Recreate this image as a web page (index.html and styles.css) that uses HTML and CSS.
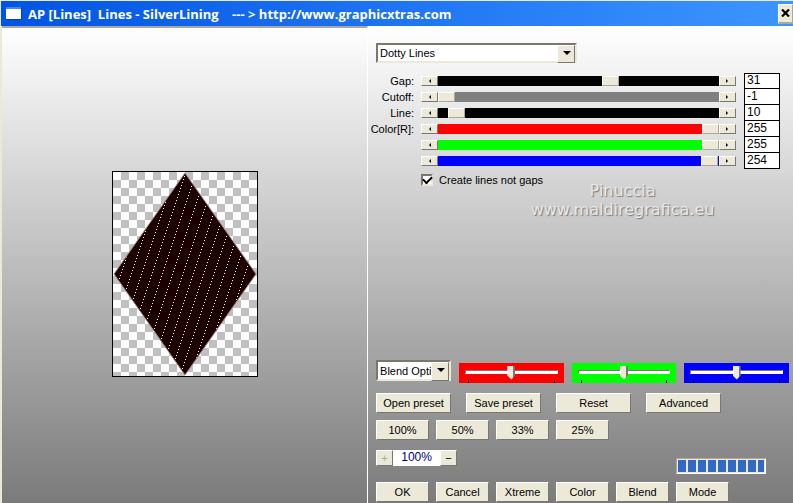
FILE: index.html
```html
<!DOCTYPE html>
<html lang="en">
<head>
    <meta charset="UTF-8">
    <meta name="viewport" content="width=device-width, initial-scale=1.0">
    <title>AP [Lines] Lines - SilverLining</title>
    <link rel="stylesheet" href="styles.css">
</head>
<body>
    <header class="titlebar">
        <svg class="app-icon" width="16" height="13" viewBox="0 0 16 13">
            <rect x="1" y="1" width="15" height="12" fill="#0a3fa8"/>
            <rect width="15" height="12" fill="#fff"/>
            <rect width="15" height="2" fill="#3a8cf0"/>
        </svg>
        <h1>AP [Lines]  Lines - SilverLining    --- &gt; http://www.graphicxtras.com</h1>
        <button class="close-btn" aria-label="Close">
            <svg width="9" height="8" viewBox="0 0 9 8"><path d="M1 0.5L8 7.5M8 0.5L1 7.5" stroke="#000" stroke-width="2.2"/></svg>
        </button>
    </header>

    <main class="window">
        <section class="preview-pane">
            <svg class="preview" width="144" height="204" viewBox="0 0 144 204">
                <defs>
                    <pattern id="checker" width="16" height="16" patternUnits="userSpaceOnUse">
                        <rect width="16" height="16" fill="#fff"/>
                        <path d="M8 0h8v8h-8zM0 8h8v8h-8z" fill="#c0c0c0"/>
                    </pattern>
                    <pattern id="dots" width="31" height="31" patternUnits="userSpaceOnUse">
                        <path d="M0 .5h1M1 28.5h1m0-3h1m0-3h1m0-3h1m0-3h1m0-3h1m0-3h1m0-3h1m0-3h1m0-3h1M11 29.5h1m0-3h1m0-3h1m0-3h1m0-3h1m0-3h1m0-3h1m0-3h1m0-3h1m0-3h1M21 30.5h1m0-3h1m0-3h1m0-3h1m0-3h1m0-3h1m0-3h1m0-3h1m0-3h1m0-3h1" stroke="#fff" fill="none" shape-rendering="crispEdges"/>
                    </pattern>
                </defs>
                <rect width="144" height="204" fill="url(#checker)"/>
                <path d="M72 1L143 102L72 203L1 102z" fill="#1c0000" stroke="#a08080" stroke-width="1"/>
                <path d="M72 2L142 102L72 202L2 102z" fill="url(#dots)"/>
            </svg>
        </section>

        <section class="controls">
            <div class="combo combo-wide">
                <select aria-label="Line style"><option>Dotty Lines</option></select>
            </div>

            <div class="sliders">
                <div class="slider-row">
                    <label for="gap">Gap:</label>
                    <div class="scrollbar">
                        <button class="arrow left" aria-label="Less"></button>
                        <input id="gap" type="range" min="0" max="50" value="31">
                        <button class="arrow right" aria-label="More"></button>
                    </div>
                    <input class="value" type="text" value="31" aria-label="Gap value">
                </div>
                <div class="slider-row">
                    <label for="cutoff">Cutoff:</label>
                    <div class="scrollbar gray">
                        <button class="arrow left" aria-label="Less"></button>
                        <input id="cutoff" type="range" min="-1" max="255" value="-1">
                        <button class="arrow right" aria-label="More"></button>
                    </div>
                    <input class="value" type="text" value="-1" aria-label="Cutoff value">
                </div>
                <div class="slider-row">
                    <label for="line">Line:</label>
                    <div class="scrollbar">
                        <button class="arrow left" aria-label="Less"></button>
                        <input id="line" type="range" min="0" max="255" value="10">
                        <button class="arrow right" aria-label="More"></button>
                    </div>
                    <input class="value" type="text" value="10" aria-label="Line value">
                </div>
                <div class="slider-row">
                    <label for="red">Color[R]:</label>
                    <div class="scrollbar red">
                        <button class="arrow left" aria-label="Less"></button>
                        <input id="red" type="range" min="0" max="255" value="255">
                        <button class="arrow right" aria-label="More"></button>
                    </div>
                    <input class="value" type="text" value="255" aria-label="Red value">
                </div>
                <div class="slider-row">
                    <label for="green"></label>
                    <div class="scrollbar green">
                        <button class="arrow left" aria-label="Less"></button>
                        <input id="green" type="range" min="0" max="255" value="255" aria-label="Green">
                        <button class="arrow right" aria-label="More"></button>
                    </div>
                    <input class="value" type="text" value="255" aria-label="Green value">
                </div>
                <div class="slider-row">
                    <label for="blue"></label>
                    <div class="scrollbar blue">
                        <button class="arrow left" aria-label="Less"></button>
                        <input id="blue" type="range" min="0" max="255" value="254" aria-label="Blue">
                        <button class="arrow right" aria-label="More"></button>
                    </div>
                    <input class="value" type="text" value="254" aria-label="Blue value">
                </div>
            </div>

            <label class="check"><input type="checkbox" checked>Create lines not gaps</label>

            <p class="signature">Pinuccia<br>www.maldiregrafica.eu</p>

            <div class="bottom">
                <div class="blend-row">
                    <div class="combo combo-small">
                        <select aria-label="Blend options"><option>Blend Options</option></select>
                    </div>
                    <input class="trackbar red" type="range" min="0" max="100" value="50" aria-label="Red blend">
                    <input class="trackbar green" type="range" min="0" max="100" value="50" aria-label="Green blend">
                    <input class="trackbar blue" type="range" min="0" max="100" value="50" aria-label="Blue blend">
                </div>
                <div class="btn-row presets">
                    <button class="btn">Open preset</button>
                    <button class="btn">Save preset</button>
                    <button class="btn">Reset</button>
                    <button class="btn">Advanced</button>
                </div>
                <div class="btn-row">
                    <button class="btn">100%</button>
                    <button class="btn">50%</button>
                    <button class="btn">33%</button>
                    <button class="btn">25%</button>
                </div>
                <div class="zoom-row">
                    <div class="zoom">
                        <button class="btn" disabled>+</button>
                        <output>100%</output>
                        <button class="btn">−</button>
                    </div>
                    <progress value="100" max="100" aria-label="Rendering"></progress>
                </div>
                <div class="btn-row">
                    <button class="btn">OK</button>
                    <button class="btn">Cancel</button>
                    <button class="btn">Xtreme</button>
                    <button class="btn">Color</button>
                    <button class="btn">Blend</button>
                    <button class="btn">Mode</button>
                </div>
            </div>
        </section>
    </main>
</body>
</html>
```
FILE: styles.css
```css
* {
    margin: 0;
    padding: 0;
    box-sizing: border-box;
}

body {
    font-family: "Liberation Sans", Arial, sans-serif;
    font-size: 11px;
    color: #000;
    min-height: 100vh;
    display: flex;
    flex-direction: column;
    background: #ece9d8;
}

button, input, select {
    font: inherit;
    color: inherit;
    border-radius: 0;
}

/* title bar */
.titlebar {
    display: flex;
    align-items: center;
    height: 25px;
    margin: 1px 0 0 1px;
    padding-left: 5px;
    background: linear-gradient(to right, #0054e3, #3d95ff);
}

.titlebar h1 {
    flex: 1;
    margin-left: 6px;
    font-family: "Open Sans", sans-serif;
    font-size: 13px;
    font-weight: 700;
    color: #fff;
    white-space: pre;
}

.close-btn {
    display: flex;
    align-items: center;
    justify-content: center;
    width: 15px;
    height: 20px;
    background: #ece9d8;
    border: 1px solid #fff;
    border-right-color: #aca899;
    border-bottom: 2px solid #aca899;
}

/* window body */
.window {
    flex: 1;
    display: grid;
    grid-template-columns: minmax(0, 6fr) minmax(0, 7fr);
    border-left: 2px solid #ece9d8;
    background: linear-gradient(#fff, #7b7b7b);
}

.preview-pane {
    display: flex;
    align-items: center;
    justify-content: center;
    padding-top: 16px;
    border-top: 2px solid #aca899;
    border-right: 1px solid #fff;
    margin-right: -1px;
}

.preview {
    box-sizing: content-box;
    border: 1px solid #000;
}

.controls {
    display: flex;
    flex-direction: column;
    padding: 17px 4px 1px 9px;
}

/* drop-downs */
.combo {
    position: relative;
    height: 20px;
    border: 2px solid;
    border-color: #7b776c #ece9d8 #ece9d8 #7b776c;
    background: #fff;
}

.combo-wide {
    width: 201px;
}

.combo-small {
    width: 75px;
    height: 21px;
}

.combo select {
    appearance: none;
    display: block;
    width: 100%;
    height: 100%;
    padding: 0 17px 0 2px;
    border: 0;
    background: none;
}

.combo::after {
    content: "";
    position: absolute;
    top: 0;
    right: 0;
    width: 16px;
    height: 100%;
    border: 1px solid;
    border-color: #fff #7b776c #7b776c #fff;
    background: #ece9d8;
    pointer-events: none;
}

.combo::before {
    content: "";
    position: absolute;
    z-index: 1;
    top: 6px;
    right: 4px;
    border: 4px solid transparent;
    border-top-color: #000;
    border-bottom: 0;
    pointer-events: none;
}

/* scroll bar sliders */
.sliders {
    margin: 10px 9px 0 -4px;
}

.slider-row {
    display: grid;
    grid-template-columns: 42px 1fr 36px;
    align-items: center;
    height: 16px;
}

.slider-row label {
    display: flex;
    justify-content: flex-end;
    white-space: nowrap;
}

.scrollbar {
    --track: #000;
    display: flex;
    height: 10px;
    margin: 0 8px 0 7px;
}

.gray {
    --track: #808080;
}

.red {
    --track: #f00;
}

.green {
    --track: #0f0;
}

.blue {
    --track: #00f;
}

.arrow {
    width: 17px;
    border: 1px solid;
    border-color: #fff #7b776c #7b776c #fff;
    background: #ece9d8;
    display: flex;
    align-items: center;
    justify-content: center;
}

.arrow::before {
    content: "";
    border: 2px solid transparent;
}

.arrow.left::before {
    border-right-color: #000;
    border-left: 0;
}

.arrow.right::before {
    border-left-color: #000;
    border-right: 0;
}

.scrollbar input {
    appearance: none;
    flex: 1;
    min-width: 0;
    height: 10px;
    background: var(--track);
}

.scrollbar input::-webkit-slider-thumb {
    appearance: none;
    width: 17px;
    height: 10px;
    border: 1px solid;
    border-color: #fff #aca899 #aca899 #fff;
    background: #ece9d8;
}

.value {
    width: 36px;
    height: 16px;
    padding: 0 0 2px 2px;
    border: 1px solid #000;
    border-top: 0;
    background: #fff;
    font-size: 12px;
}

.slider-row:first-child .value {
    border-top: 1px solid #000;
}

.check {
    display: flex;
    align-items: center;
    align-self: flex-start;
    gap: 6px;
    height: 12px;
    margin: 5px 0 0 45px;
}

.check input {
    appearance: none;
    width: 12px;
    height: 12px;
    border: 2px solid;
    border-color: #7b776c #ece9d8 #ece9d8 #7b776c;
    background: #fff;
}

.check input:checked::before {
    content: "";
    display: block;
    width: 7px;
    height: 4px;
    border: solid #000;
    border-width: 0 0 2px 2px;
    transform: rotate(-45deg);
}

.signature {
    margin-top: -5px;
    padding-left: 80px;
    font-family: "DejaVu Sans", sans-serif;
    font-size: 16px;
    line-height: 19px;
    text-align: center;
    color: #e8e8e8;
    text-shadow: 1px 1px 1px #777;
}

/* lower group */
.bottom {
    margin-top: auto;
}

.blend-row {
    display: flex;
    gap: 8px;
    height: 23px;
}

.trackbar {
    appearance: none;
    flex: 1;
    min-width: 0;
    height: 20px;
    margin-top: 3px;
    padding: 0 6px;
    background:
        linear-gradient(#000, #000) 9px 100% / 1px 3px no-repeat,
        linear-gradient(#000, #000) calc(100% - 9px) 100% / 1px 3px no-repeat,
        var(--track);
}

.trackbar::-webkit-slider-runnable-track {
    height: 4px;
    margin-bottom: 3px;
    border: 1px solid;
    border-color: #7b776c #fff #fff #7b776c;
    background: #fff;
}

.trackbar::-webkit-slider-thumb {
    appearance: none;
    width: 8px;
    height: 14px;
    margin-top: -5px;
    background: linear-gradient(to right, #fff 1px, #ece9d8 1px 6px, #7b776c 6px);
    clip-path: polygon(0 0, 100% 0, 100% 72%, 50% 100%, 0 72%);
}

.btn {
    width: 53px;
    height: 20px;
    border: 1px solid;
    border-color: #fff #7b776c #7b776c #fff;
    background: #ece9d8;
    white-space: nowrap;
}

.btn-row {
    display: flex;
    gap: 7px;
    margin-top: 7px;
}

.presets {
    gap: 15px;
    margin-top: 10px;
}

.presets .btn {
    width: 75px;
}

.zoom-row {
    display: flex;
    justify-content: space-between;
    height: 24px;
    margin: 10px 23px 8px 0;
}

.zoom-row + .btn-row {
    margin-top: 0;
}

.zoom {
    display: flex;
    height: 16px;
}

.zoom .btn {
    width: 17px;
    height: 16px;
}

.zoom .btn:disabled {
    color: #aca899;
}

.zoom output {
    width: 47px;
    height: 16px;
    line-height: 15px;
    text-align: center;
    color: #000080;
    background: #fff;
    font-size: 12px;
}

progress {
    appearance: none;
    align-self: flex-end;
    width: 90px;
    height: 16px;
    border: 1px solid;
    border-color: #aca899 #fff #fff #aca899;
}

progress::-webkit-progress-bar {
    padding: 1px;
    background: #ece9d8;
}

progress::-webkit-progress-value {
    background: repeating-linear-gradient(to right, #316ac5 0 8px, #ece9d8 8px 10px);
}
```
